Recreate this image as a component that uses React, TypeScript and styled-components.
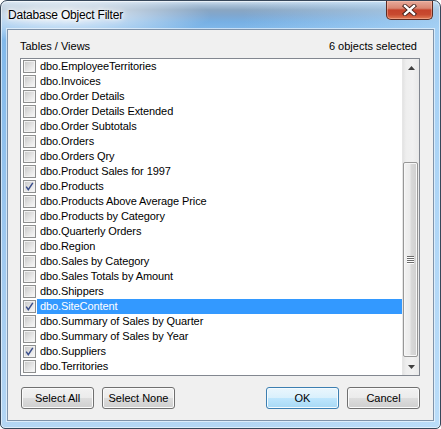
import React from 'react';
import styled, { createGlobalStyle, css } from 'styled-components';

const GlobalStyle = createGlobalStyle`
  html, body {
    margin: 0;
    padding: 0;
    background: #ffffff;
  }
  body {
    font-family: 'Liberation Sans', Arial, sans-serif;
  }
`;

const Frame = styled.div`
  width: 441px;
  height: 429px;
  box-sizing: border-box;
  border: 1px solid #37475a;
  border-radius: 7px 7px 5px 5px;
  overflow: hidden;
  display: flex;
  flex-direction: column;
  box-shadow: inset 0 0 0 1px rgba(255, 255, 255, 0.55);
  background:
    radial-gradient(ellipse 150px 26px at 60px 15px, rgba(255, 255, 255, 0.9), rgba(255, 255, 255, 0) 100%),
    linear-gradient(to right, rgba(210, 235, 255, 0) 55%, rgba(190, 225, 252, 0.6) 100%),
    linear-gradient(
      to bottom,
      #d2e2f1 0px,
      #a9c1d8 4px,
      #8aa6c2 9px,
      #80a7cf 14px,
      #77b0e4 21px,
      #80b8ea 28px,
      #a0c9ef 60%,
      #b4d6f4 100%
    );
`;

const TitleBar = styled.div`
  height: 28px;
  flex: none;
  display: flex;
  align-items: flex-start;
  justify-content: space-between;
  padding-left: 7px;
`;

const TitleText = styled.div`
  margin-top: 6px;
  font-size: 12px;
  line-height: 16px;
  letter-spacing: -0.2px;
  color: #000;
  text-shadow: 0 0 6px #fff, 0 0 10px #fff, 0 0 3px #fff;
`;

const CloseButton = styled.div`
  width: 47px;
  height: 19px;
  margin-right: 7px;
  box-sizing: border-box;
  border: 1px solid #5d2b22;
  border-top: none;
  border-radius: 0 0 5px 5px;
  display: flex;
  align-items: center;
  justify-content: center;
  box-shadow: inset 0 0 0 1px rgba(255, 200, 180, 0.45);
  background: linear-gradient(
    to bottom,
    #e7aa9b 0%,
    #d98672 40%,
    #c5432b 50%,
    #c84a30 75%,
    #e07b55 100%
  );
`;

const Client = styled.div`
  margin: 0 6px;
  height: 392px;
  flex: none;
  box-sizing: border-box;
  border: 1px solid #7f93aa;
  background: #f0f0f0;
  display: flex;
  flex-direction: column;
  box-shadow: 0 0 0 1px rgba(255, 255, 255, 0.55);
`;

const Header = styled.div`
  height: 28px;
  flex: none;
  box-sizing: border-box;
  padding: 3px 16px 0 12px;
  display: flex;
  align-items: center;
  justify-content: space-between;
  font-size: 11px;
  color: #000;
`;

const ListBox = styled.div`
  margin-left: 12px;
  width: 400px;
  height: 318px;
  flex: none;
  box-sizing: border-box;
  border: 1px solid #828790;
  background: #fff;
  display: flex;
`;

const Items = styled.div`
  flex: 1;
  display: flex;
  flex-direction: column;
  overflow: hidden;
`;

const Row = styled.div`
  height: 15px;
  flex: none;
  display: flex;
  align-items: center;
`;

const Check = styled.div`
  position: relative;
  width: 13px;
  height: 13px;
  margin-left: 2px;
  flex: none;
  box-sizing: border-box;
  border: 1px solid #8e8f8f;
  background: #f4f4f4;

  &::before {
    content: '';
    position: absolute;
    inset: 1px;
    background: linear-gradient(135deg, #cbcbcb 0%, #e4e4e4 55%, #f6f6f6 100%);
    box-shadow: 0 0 0 1px #f2f2f2;
  }

  svg {
    position: absolute;
    left: 0;
    top: 0;
  }
`;

const Label = styled.div<{ $selected?: boolean }>`
  flex: 1;
  height: 15px;
  margin-left: 1px;
  padding-left: 3px;
  font-size: 11px;
  line-height: 15px;
  letter-spacing: -0.1px;
  white-space: nowrap;
  color: #000;
  ${(p) =>
    p.$selected &&
    css`
      background: #3399ff;
      color: #fff;
    `}
`;

const ScrollBar = styled.div`
  width: 17px;
  flex: none;
  display: flex;
  flex-direction: column;
  background: linear-gradient(to right, #e3e3e3 0px, #eeeeee 3px, #f1f1f1 60%, #e9e9e9 100%);
  border-left: 1px solid #e6e6e6;
  box-sizing: border-box;
`;

const Arrow = styled.div`
  height: 17px;
  flex: none;
  display: flex;
  align-items: center;
  justify-content: center;
`;

const Track = styled.div`
  flex: 1;
  display: flex;
  flex-direction: column;
`;

const Thumb = styled.div<{ $offset: number; $size: number }>`
  margin: ${(p) => p.$offset}px 0 0 0;
  height: ${(p) => p.$size}px;
  width: 15px;
  box-sizing: border-box;
  border: 1px solid #979797;
  border-radius: 2px;
  display: flex;
  align-items: center;
  justify-content: center;
  box-shadow: inset 0 0 0 1px #f7f7f7;
  background: linear-gradient(
    to right,
    #f2f2f2 0%,
    #ebebeb 45%,
    #d9d9d9 55%,
    #cfcfcf 100%
  );
`;

const Grip = styled.div`
  width: 7px;
  display: flex;
  flex-direction: column;
  gap: 1px;

  span {
    display: block;
    height: 1px;
    background: #6b6b6b;
    box-shadow: 0 1px 0 #ffffff;
  }
`;

const ButtonRow = styled.div`
  margin-top: 11px;
  padding: 0 13px;
  display: flex;
  gap: 8px;
`;

const Spacer = styled.div`
  flex: 1;
`;

const Button = styled.div<{ $default?: boolean }>`
  width: 73px;
  height: 22px;
  box-sizing: border-box;
  border: 1px solid #707070;
  border-radius: 3px;
  display: flex;
  align-items: center;
  justify-content: center;
  font-size: 11px;
  color: #000;
  box-shadow: inset 0 0 0 1px #fbfbfb;
  background: linear-gradient(to bottom, #f2f2f2 0%, #ebebeb 50%, #dddddd 50%, #cfcfcf 100%);

  ${(p) =>
    p.$default &&
    css`
      border-color: #3c7fb1;
      box-shadow: inset 0 0 0 1px #f4fbff;
      background: linear-gradient(to bottom, #eaf6fd 0%, #d9f0fc 50%, #bee6fd 50%, #a7d9f5 100%);
    `}
`;

const tables = [
  { name: 'dbo.EmployeeTerritories' },
  { name: 'dbo.Invoices' },
  { name: 'dbo.Order Details' },
  { name: 'dbo.Order Details Extended' },
  { name: 'dbo.Order Subtotals' },
  { name: 'dbo.Orders' },
  { name: 'dbo.Orders Qry' },
  { name: 'dbo.Product Sales for 1997' },
  { name: 'dbo.Products', checked: true },
  { name: 'dbo.Products Above Average Price' },
  { name: 'dbo.Products by Category' },
  { name: 'dbo.Quarterly Orders' },
  { name: 'dbo.Region' },
  { name: 'dbo.Sales by Category' },
  { name: 'dbo.Sales Totals by Amount' },
  { name: 'dbo.Shippers' },
  { name: 'dbo.SiteContent', checked: true, selected: true },
  { name: 'dbo.Summary of Sales by Quarter' },
  { name: 'dbo.Summary of Sales by Year' },
  { name: 'dbo.Suppliers', checked: true },
  { name: 'dbo.Territories' },
];

const CheckMark = () => (
  <svg width="11" height="11" viewBox="0 0 11 11">
    <path d="M2.2 5.6 L4.3 8.6 L8.8 1.8" fill="none" stroke="#3b4f8c" strokeWidth="1.5" />
  </svg>
);

const CloseGlyph = () => (
  <svg width="15" height="12" viewBox="0 0 15 12">
    <path d="M3 2 L12 10 M12 2 L3 10" stroke="#3d1c16" strokeWidth="4.2" strokeLinecap="square" />
    <path d="M3 2 L12 10 M12 2 L3 10" stroke="#ffffff" strokeWidth="2.4" strokeLinecap="square" />
  </svg>
);

export default function App() {
  return (
    <>
      <GlobalStyle />
      <Frame>
        <TitleBar>
          <TitleText>Database Object Filter</TitleText>
          <CloseButton>
            <CloseGlyph />
          </CloseButton>
        </TitleBar>

        <Client>
          <Header>
            <span>Tables / Views</span>
            <span>6 objects selected</span>
          </Header>

          <ListBox>
            <Items>
              {tables.map((t) => (
                <Row key={t.name}>
                  <Check>{t.checked && <CheckMark />}</Check>
                  <Label $selected={t.selected}>{t.name}</Label>
                </Row>
              ))}
            </Items>
            <ScrollBar>
              <Arrow>
                <svg width="7" height="4" viewBox="0 0 7 4">
                  <path d="M0 4 L3.5 0 L7 4 Z" fill="#404040" />
                </svg>
              </Arrow>
              <Track>
                <Thumb $offset={86} $size={195}>
                  <Grip>
                    <span />
                    <span />
                    <span />
                    <span />
                  </Grip>
                </Thumb>
              </Track>
              <Arrow>
                <svg width="7" height="4" viewBox="0 0 7 4">
                  <path d="M0 0 L7 0 L3.5 4 Z" fill="#404040" />
                </svg>
              </Arrow>
            </ScrollBar>
          </ListBox>

          <ButtonRow>
            <Button>Select All</Button>
            <Button>Select None</Button>
            <Spacer />
            <Button $default>OK</Button>
            <Button>Cancel</Button>
          </ButtonRow>
        </Client>
      </Frame>
    </>
  );
}
